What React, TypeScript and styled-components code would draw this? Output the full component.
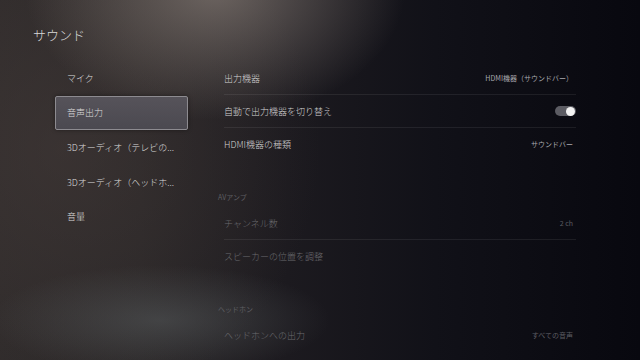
import React from 'react';
import styled, { createGlobalStyle } from 'styled-components';

const GlobalStyle = createGlobalStyle`
  html, body {
    margin: 0;
    padding: 0;
    background: #0b0b12;
  }
  body {
    font-family: "Noto Sans CJK JP", "Noto Sans", sans-serif;
  }
`;

const Screen = styled.div`
  width: 640px;
  height: 360px;
  overflow: hidden;
  display: flex;
  flex-direction: column;
  color: #d4d4d4;
  background:
    radial-gradient(ellipse 190px 130px at 215px -10px, rgba(132, 122, 116, 0.75), rgba(132, 122, 116, 0) 100%),
    radial-gradient(ellipse 170px 55px at 160px 320px, rgba(86, 90, 92, 0.55), rgba(86, 90, 92, 0) 100%),
    radial-gradient(ellipse 260px 260px at 60px 150px, rgba(70, 60, 58, 0.5), rgba(70, 60, 58, 0) 100%),
    linear-gradient(90deg, #2f2b2b 0%, #292627 22%, #1c1a1f 45%, #111118 68%, #08080f 100%);
`;

const Header = styled.div`
  padding: 25px 0 0 33px;
  height: 36px;
  box-sizing: border-box;
`;

const Title = styled.h1`
  margin: 0;
  font-size: 13px;
  font-weight: 300;
  line-height: 20px;
  color: #d9d9d9;
`;

const Body = styled.div`
  display: flex;
  padding-top: 25px;
`;

const Sidebar = styled.nav`
  display: flex;
  flex-direction: column;
  margin-left: 55px;
  width: 133px;
`;

const NavItem = styled.div<{ $active?: boolean }>`
  height: 34.6px;
  box-sizing: border-box;
  display: flex;
  align-items: center;
  padding-left: 11px;
  font-size: 9px;
  font-weight: 300;
  white-space: nowrap;
  color: #dcdcdc;
  border-radius: 2px;
  border: 1px solid ${p => (p.$active ? '#8d8b90' : 'transparent')};
  background: ${p => (p.$active ? 'linear-gradient(180deg, #56535a, #4b4950)' : 'transparent')};
  box-shadow: ${p => (p.$active ? '0 0 4px rgba(0,0,0,0.4)' : 'none')};
`;

const Panel = styled.div`
  margin-left: 30px;
  width: 362px;
  display: flex;
  flex-direction: column;
  padding-top: 1px;
`;

const SectionTitle = styled.div`
  margin-top: 26px;
  height: 20px;
  display: flex;
  align-items: center;
  font-size: 7px;
  color: #5e5e62;
`;

const Row = styled.div<{ $dim?: boolean; $divider?: boolean }>`
  height: 33px;
  box-sizing: border-box;
  margin-left: 6px;
  margin-right: 4px;
  display: flex;
  align-items: center;
  justify-content: space-between;
  border-bottom: 1px solid ${p => (p.$divider ? 'rgba(255,255,255,0.075)' : 'transparent')};
  color: ${p => (p.$dim ? '#6a6a6e' : '#d4d4d4')};
`;

const Label = styled.span`
  font-size: 9px;
  font-weight: 300;
`;

const Value = styled.span<{ $dim?: boolean }>`
  font-size: 7px;
  padding-right: 3px;
  color: ${p => (p.$dim ? '#5c5c62' : '#a9a9ae')};
`;

const Toggle = styled.span<{ $on?: boolean }>`
  width: 21px;
  height: 10px;
  border-radius: 5px;
  background: #5c5c63;
  display: flex;
  align-items: center;
  justify-content: ${p => (p.$on ? 'flex-end' : 'flex-start')};
  padding: 0 1px;
  box-sizing: border-box;
  &::after {
    content: '';
    width: 9px;
    height: 9px;
    border-radius: 50%;
    background: #f2f2f2;
  }
`;

const navItems = [
  'マイク',
  '音声出力',
  '3Dオーディオ（テレビの...',
  '3Dオーディオ（ヘッドホ...',
  '音量',
];

const App = () => (
  <Screen>
    <GlobalStyle />
    <Header>
      <Title>サウンド</Title>
    </Header>
    <Body>
      <Sidebar>
        {navItems.map((item, i) => (
          <NavItem key={item} $active={i === 1}>
            {item}
          </NavItem>
        ))}
      </Sidebar>
      <Panel>
        <Row $divider>
          <Label>出力機器</Label>
          <Value>HDMI機器（サウンドバー）</Value>
        </Row>
        <Row $divider>
          <Label>自動で出力機器を切り替え</Label>
          <Toggle $on />
        </Row>
        <Row>
          <Label>HDMI機器の種類</Label>
          <Value>サウンドバー</Value>
        </Row>

        <SectionTitle>AVアンプ</SectionTitle>
        <Row $dim $divider>
          <Label>チャンネル数</Label>
          <Value $dim>2 ch</Value>
        </Row>
        <Row $dim>
          <Label>スピーカーの位置を調整</Label>
        </Row>

        <SectionTitle>ヘッドホン</SectionTitle>
        <Row $dim>
          <Label>ヘッドホンへの出力</Label>
          <Value $dim>すべての音声</Value>
        </Row>
      </Panel>
    </Body>
  </Screen>
);

export default App;
